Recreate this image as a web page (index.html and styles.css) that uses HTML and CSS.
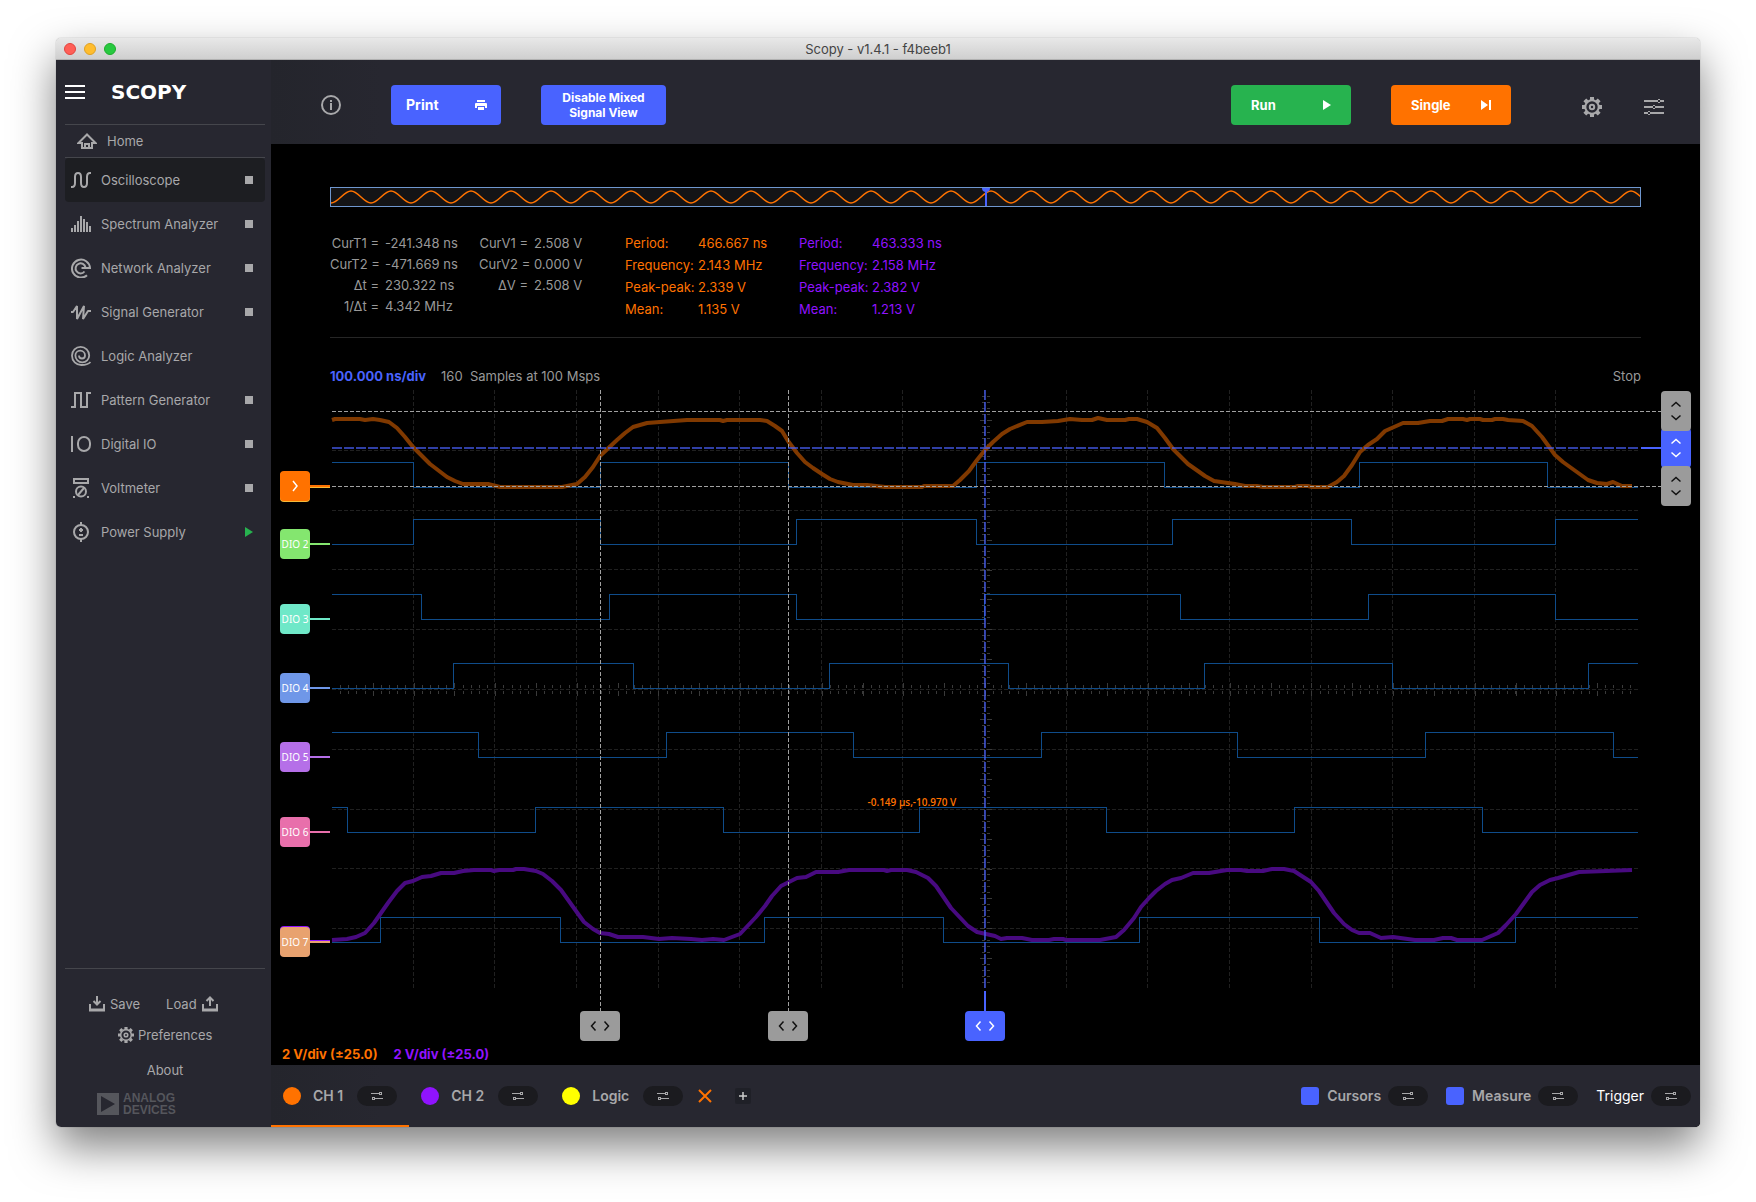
FILE: index.html
```html
<!DOCTYPE html>
<html lang="en">
<head>
<meta charset="utf-8">
<title>Scopy - v1.4.1 - f4beeb1</title>
<link rel="stylesheet" href="styles.css">
</head>
<body>
<svg class="defs" width="0" height="0" aria-hidden="true">
  <symbol id="i-tune" viewBox="0 0 12 10"><path d="M0 2.500h8M4 7.500h8" stroke="currentColor" fill="none"/><rect x="8.500" y="1.500" width="2" height="2" fill="none" stroke="currentColor"/><rect x="1.500" y="6.500" width="2" height="2" fill="none" stroke="currentColor"/></symbol>
  <symbol id="i-gear" viewBox="0 0 20 20"><circle cx="10" cy="10" r="6.700" fill="none" stroke="currentColor" stroke-width="2"/><circle cx="10" cy="10" r="2.200" fill="none" stroke="currentColor" stroke-width="2"/><path d="M10 0v3M10 17v3M0 10h3M17 10h3M2.800 2.800l2.200 2.200M15 15l2.200 2.200M2.800 17.200l2.200-2.200M15 5l2.200-2.200" stroke="currentColor" stroke-width="4"/></symbol>
  <symbol id="i-leftright" viewBox="0 0 20 10"><path d="M5.500 .5L1.500 5l4 4.500M14.500 .5l4 4.500-4 4.500" fill="none" stroke="currentColor" stroke-width="1.500"/></symbol>
  <symbol id="i-updown" viewBox="0 0 10 20"><path d="M.5 5.500L5 1.500l4.500 4M.5 14.500l4.500 4 4.500-4" fill="none" stroke="currentColor" stroke-width="1.500"/></symbol>
</svg>

<div class="window">
  <header class="titlebar">
    <div class="lights"><span class="light light-red"></span><span class="light light-yellow"></span><span class="light light-green"></span></div>
    <h1 class="title">Scopy - v1.4.1 - f4beeb1</h1>
  </header>

  <div class="app">
    <aside class="sidebar">
      <div class="brand">
        <button class="plain menu" aria-label="Menu"><svg width="20" height="14"><path d="M0 1h20M0 7h20M0 13h20" stroke="#fff" stroke-width="2"/></svg></button>
        <span class="brand-name">SCOPY</span>
      </div>
      <a class="home" href="#"><svg width="20" height="16" fill="none" stroke="currentColor" stroke-width="2"><path d="M1.500 10L10 1.500 18.500 10H15v5H5v-5z"/><path d="M8 15v-4h4v4"/></svg>Home</a>
      <ul class="tools">
        <li><a class="tool active" href="#"><svg width="20" height="20" fill="none" stroke="currentColor" stroke-width="2"><path d="M0 17h1c2 0 3-1 3-4V7c0-3 1-4 3-4s3 1 3 4v6c0 3 1 4 3 4s3-1 3-4V7c0-3 1-4 3-4h1"/></svg><span>Oscilloscope</span><i class="stop"></i></a></li>
        <li><a class="tool" href="#"><svg width="20" height="20" stroke="currentColor" stroke-width="2"><path d="M1 18v-4M4 18v-7M7 18V7M10 18V2M13 18V5M16 18V8M19 18v-6"/></svg><span>Spectrum Analyzer</span><i class="stop"></i></a></li>
        <li><a class="tool" href="#"><svg width="20" height="20" fill="none" stroke="currentColor" stroke-width="2"><path d="M16 17.300A9 9 0 1 1 19 10H10.500"/><path d="M13.500 13.500A5 5 0 1 1 14.500 9.500"/></svg><span>Network Analyzer</span><i class="stop"></i></a></li>
        <li><a class="tool" href="#"><svg width="20" height="20" fill="none" stroke="currentColor" stroke-width="2"><path d="M0 10h2l4-6v13L13 4l-1 13 5-8h3" stroke-linejoin="bevel"/></svg><span>Signal Generator</span><i class="stop"></i></a></li>
        <li><a class="tool" href="#"><svg width="20" height="20" fill="none" stroke="currentColor" stroke-width="1.800"><path d="M19.500 16c-2 2.200-5 3-9 3A9.300 9.300 0 0 1 1 9.500a8.600 8.600 0 0 1 17.200 0 6.900 6.900 0 0 1-13.800 0 4.800 4.800 0 0 1 9.600 0 3 3 0 0 1-6 0"/></svg><span>Logic Analyzer</span></a></li>
        <li><a class="tool" href="#"><svg width="20" height="20" fill="none" stroke="currentColor" stroke-width="2"><path d="M0 17h4V3h6v14h6V3h4"/></svg><span>Pattern Generator</span><i class="stop"></i></a></li>
        <li><a class="tool" href="#"><svg width="20" height="20" fill="none" stroke="currentColor" stroke-width="2"><path d="M1 2v16"/><rect x="7" y="3" width="12" height="14" rx="6"/></svg><span>Digital IO</span><i class="stop"></i></a></li>
        <li><a class="tool" href="#"><svg width="20" height="20" fill="none" stroke="currentColor" stroke-width="2"><path d="M3 1h14v4H3zM7 17l6-7M2 19h2M16 19h2"/><circle cx="10" cy="13.500" r="5"/></svg><span>Voltmeter</span><i class="stop"></i></a></li>
        <li><a class="tool" href="#"><svg width="20" height="20" fill="none" stroke="currentColor" stroke-width="2"><circle cx="10" cy="10" r="7"/><path d="M10 0v4M10 16v4M8 8h4M10 6v4M8 13h4"/></svg><span>Power Supply</span><i class="running"></i></a></li>
      </ul>
      <footer class="side-foot">
        <div class="side-row">
          <button class="plain"><svg width="16" height="16" fill="none" stroke="currentColor" stroke-width="2"><path d="M1 8v6h14V8M8 0v8M4.500 5L8 8.500 11.500 5"/><path d="M0 14h16" stroke-width="3"/></svg>Save</button>
          <button class="plain">Load<svg width="16" height="16" fill="none" stroke="currentColor" stroke-width="2"><path d="M1 8v6h14V8M8 10V2M4.500 5L8 1.500 11.500 5"/><path d="M0 14h16" stroke-width="3"/></svg></button>
        </div>
        <button class="plain prefs"><svg width="16" height="16"><use href="#i-gear"/></svg>Preferences</button>
        <button class="plain about">About</button>
        <div class="adi"><svg width="22" height="22"><path fill="#55565c" fill-rule="evenodd" d="M0 0h22v22H0zM4 3v16l14-8z"/></svg><span>ANALOG<br>DEVICES</span></div>
      </footer>
    </aside>

    <main class="main">
      <div class="toolbar">
        <button class="plain" aria-label="Info"><svg width="20" height="20"><circle cx="10" cy="10" r="9" fill="none" stroke="currentColor" stroke-width="2"/><path d="M10 5v2M10 8v7" stroke="currentColor" stroke-width="2"/></svg></button>
        <button class="btn print">Print<svg width="12" height="12" fill="#fff"><path d="M2 1h8v2H2zM1 4h10a1 1 0 0 1 1 1v4h-2V7H2v2H0V5a1 1 0 0 1 1-1zM3 8h6v3H3z"/></svg></button>
        <button class="btn mixed">Disable Mixed Signal View</button>
        <div class="spacer"></div>
        <button class="btn run">Run<svg width="8" height="10" fill="#fff"><path d="M0 0l8 5-8 5z"/></svg></button>
        <button class="btn single">Single<svg width="10" height="10" fill="#fff"><path d="M0 0l7 5-7 5zM8 0h2v10H8z"/></svg></button>
        <div class="toolbar-icons">
          <button class="plain" aria-label="Settings"><svg width="20" height="20"><use href="#i-gear"/></svg></button>
          <button class="plain" aria-label="Channel settings"><svg width="20" height="16" shape-rendering="crispEdges"><path d="M0 2h13M17 2h3M0 8h8M12 8h8M0 14h3M7 14h13" stroke="currentColor" stroke-width="2"/><path d="M14 .5h2M14 3.500h2M13.500 1v2M16.500 1v2M9 6.500h2M9 9.500h2M4 12.500h2M4 15.500h2M8.500 7v2M11.500 7v2M3.500 13v2M6.500 13v2" stroke="currentColor"/></svg></button>
        </div>
      </div>

      <section class="preview" aria-label="Buffer preview">
        <svg width="100%" height="18">
          <defs><pattern id="sine" width="40" height="18" patternUnits="userSpaceOnUse"><path d="M-20 3C-12.700 3-7.300 15 0 15S12.700 3 20 3 32.700 15 40 15 52.700 3 60 3" fill="none" stroke="#ff7200" stroke-width="1.500"/></pattern></defs>
          <rect width="100%" height="18" fill="url(#sine)"/>
        </svg>
        <span class="preview-mark"></span>
      </section>

      <section class="readouts">
        <table class="cursor-t">
          <tr><th>CurT1 =</th><td>-241.348 ns</td></tr>
          <tr><th>CurT2 =</th><td>-471.669 ns</td></tr>
          <tr><th>Δt =</th><td>230.322 ns</td></tr>
          <tr><th>1/Δt =</th><td>4.342 MHz</td></tr>
        </table>
        <table class="cursor-v">
          <tr><th>CurV1 =</th><td>2.508 V</td></tr>
          <tr><th>CurV2 =</th><td>0.000 V</td></tr>
          <tr><th>ΔV =</th><td>2.508 V</td></tr>
        </table>
        <table class="measure ch1">
          <tr><th>Period:</th><td>466.667 ns</td></tr>
          <tr><th>Frequency:</th><td>2.143 MHz</td></tr>
          <tr><th>Peak-peak:</th><td>2.339 V</td></tr>
          <tr><th>Mean:</th><td>1.135 V</td></tr>
        </table>
        <table class="measure ch2">
          <tr><th>Period:</th><td>463.333 ns</td></tr>
          <tr><th>Frequency:</th><td>2.158 MHz</td></tr>
          <tr><th>Peak-peak:</th><td>2.382 V</td></tr>
          <tr><th>Mean:</th><td>1.213 V</td></tr>
        </table>
      </section>

      <div class="plot-head">
        <strong>100.000 ns/div</strong><span>160&nbsp; Samples at 100 Msps</span><span class="state">Stop</span>
      </div>

      <section class="plot">
        <svg class="traces" viewBox="0 0 1306 598" preserveAspectRatio="none" fill="none">
          <g shape-rendering="crispEdges">
            <path stroke="#202020" stroke-dasharray="4 2" d="M81.500 0V598M162.500 0V598M244.500 0V598M326.500 0V598M407.500 0V598M489.500 0V598M570.500 0V598M652.500 0V598M734.500 0V598M815.500 0V598M897.500 0V598M979.500 0V598M1060.500 0V598M1142.500 0V598M1223.500 0V598M0 60.500H1306M0 120.500H1306M0 179.500H1306M0 239.500H1306M0 299.500H1306M0 359.500H1306M0 419.500H1306M0 478.500H1306M0 538.500H1306"/>
            <g stroke="#3a3a3a">
              <path stroke-width="3" stroke-dasharray="1 7.162" d="M8.100 296.500H1306M8.100 302.500H1306"/>
              <path stroke-width="5" stroke-dasharray="1 39.812" d="M40.800 295.500H1306M40.800 303.500H1306"/>
              <path stroke-width="3" stroke-dasharray="1 4.980" d="M651.500 6V598M656.500 6V598"/>
              <path stroke-width="5" stroke-dasharray="1 28.900" d="M650.500 30V598M657.500 30V598"/>
            </g>
            <g stroke="#0f4c8a">
              <path d="M0 72.500H81.500V97.500H268.500V72.500H456.500V97.500H644.500V72.500H832.500V97.500H1027.500V72.500H1215.500V97.500H1306"/>
              <path d="M0 154.500H81.500V129.500H268.500V154.500H464.500V129.500H644.500V154.500H840.500V129.500H1019.500V154.500H1223.500V129.500H1306"/>
              <path d="M0 204.500H89.500V229.500H277.500V204.500H464.500V229.500H652.500V204.500H848.500V229.500H1036.500V204.500H1223.500V229.500H1306"/>
              <path d="M0 298.500H121.500V273.500H301.500V298.500H497.500V273.500H676.500V298.500H872.500V273.500H1060.500V298.500H1256.500V273.500H1306"/>
              <path d="M0 342.500H146.500V367.500H334.500V342.500H521.500V367.500H709.500V342.500H905.500V367.500H1093.500V342.500H1281.500V367.500H1306"/>
              <path d="M0 417.500H15.500V442.500H203.500V417.500H391.500V442.500H587.500V417.500H774.500V442.500H962.500V417.500H1150.500V442.500H1306"/>
              <path d="M0 552.500H48.500V527.500H228.500V552.500H432.500V527.500H611.500V552.500H807.500V527.500H987.500V552.500H1183.500V527.500H1306"/>
            </g>
          </g>
          <g stroke-width="4" stroke-linejoin="round">
            <polyline stroke="#803900" points="0,30 3,29 28,29 33,30 41,29 48,30 57,32 65,38 73,47 81,57 98,74 115,87 123,91 131,94 156,94 168,97 230,97 245,94 253,87 261,77 268,66 285,50 293,43 301,37 315,33 328,32 355,30 388,30 391,31 395,30 428,30 435,31 443,36 450,41 456,51 465,63 473,72 481,78 490,84 498,89 506,92 521,95 535,95 553,97 590,97 592,96 621,96 628,90 637,81 645,70 653,60 661,52 670,44 678,39 695,32 710,32 726,31 738,29 750,30 760,30 766,28 775,30 793,30 797,29 805,29 815,32 825,38 833,48 841,59 849,67 856,74 873,86 882,91 903,94 913,96 925,96 931,97 963,97 966,96 976,96 980,97 996,97 1005,92 1012,86 1020,75 1028,62 1036,55 1045,49 1053,41 1071,33 1086,33 1098,31 1110,31 1116,29 1131,29 1135,30 1138,29 1148,29 1151,30 1160,30 1163,29 1171,29 1176,30 1191,31 1200,36 1210,47 1223,65 1231,72 1256,90 1265,93 1275,94 1281,92 1290,96 1300,96"/>
            <polyline stroke="#480a80" points="0,550 15,549 24,547 33,543 42,533 56,513 65,501 73,493 81,491 90,487 99,486 109,483 122,483 131,481 142,480 159,480 162,481 167,480 181,480 184,479 192,479 204,481 211,484 220,491 229,500 244,521 252,532 261,539 268,543 277,544 286,547 311,547 327,549 340,548 359,549 370,550 381,549 392,550 400,547 408,544 424,527 433,516 440,506 449,496 465,488 474,487 484,482 506,482 517,480 552,480 555,481 559,480 575,480 584,482 596,488 604,496 619,518 636,536 645,542 654,544 663,546 669,549 675,548 690,548 700,550 717,550 722,549 731,549 734,550 768,550 784,547 792,540 802,528 809,517 817,508 824,501 833,494 840,490 849,488 861,483 877,483 895,480 909,480 915,481 931,481 940,479 952,479 962,481 979,492 987,501 1002,523 1012,534 1020,540 1027,543 1038,543 1049,548 1061,547 1083,550 1102,550 1111,548 1119,548 1125,550 1150,550 1166,543 1174,535 1184,524 1200,502 1208,495 1218,490 1226,488 1247,482 1274,481 1300,480"/>
          </g>
          <g shape-rendering="crispEdges">
            <path stroke="#a0a0a0" stroke-dasharray="4 2" d="M0 21.500H1330M0 96.500H1330M268.500 0V622M456.500 0V622"/>
            <path stroke="#4963ff" stroke-opacity=".65" stroke-width="2" stroke-dasharray="10 2" d="M0 58H1306M653 0V598"/>
            <path stroke="#4963ff" stroke-width="2" d="M1309 58H1330M653 601V622"/>
          </g>
        </svg>

        <span class="coords">-0.149 µs,-10.970 V</span>

        <div class="handle ch-h under-dio1"></div>
        <button class="handle ch-h h-ch1" aria-label="Channel 1"><svg width="6" height="12"><path d="M1 1l4 5-4 5" fill="none" stroke="#fff" stroke-width="1.500"/></svg></button>
        <button class="handle ch-h h-dio2">DIO 2</button>
        <button class="handle ch-h h-dio3">DIO 3</button>
        <button class="handle ch-h h-dio4">DIO 4</button>
        <button class="handle ch-h h-dio5">DIO 5</button>
        <button class="handle ch-h h-dio6">DIO 6</button>
        <div class="handle ch-h under-ch2"></div>
        <button class="handle ch-h h-dio7">DIO 7</button>

        <button class="handle v-h v-trigger" aria-label="Trigger level"><svg width="10" height="20"><use href="#i-updown"/></svg></button>
        <button class="handle v-h v-cursor1" aria-label="Voltage cursor 1"><svg width="10" height="20"><use href="#i-updown"/></svg></button>
        <button class="handle v-h v-cursor2" aria-label="Voltage cursor 2"><svg width="10" height="20"><use href="#i-updown"/></svg></button>

        <button class="handle t-h t-cursor2" aria-label="Time cursor 2"><svg width="20" height="10"><use href="#i-leftright"/></svg></button>
        <button class="handle t-h t-cursor1" aria-label="Time cursor 1"><svg width="20" height="10"><use href="#i-leftright"/></svg></button>
        <button class="handle t-h t-trigger" aria-label="Trigger position"><svg width="20" height="10"><use href="#i-leftright"/></svg></button>
      </section>

      <div class="scales"><span class="ch1">2 V/div (±25.0)</span><span class="ch2">2 V/div (±25.0)</span></div>

      <div class="bottombar">
        <div class="channel selected"><label><input class="dot dot-ch1" type="checkbox" checked>CH 1</label><button class="pill" aria-label="CH 1 settings"><svg width="12" height="10"><use href="#i-tune"/></svg></button></div>
        <div class="channel"><label><input class="dot dot-ch2" type="checkbox" checked>CH 2</label><button class="pill" aria-label="CH 2 settings"><svg width="12" height="10"><use href="#i-tune"/></svg></button></div>
        <div class="channel"><label><input class="dot dot-logic" type="checkbox" checked>Logic</label><button class="pill" aria-label="Logic settings"><svg width="12" height="10"><use href="#i-tune"/></svg></button></div>
        <button class="plain close" aria-label="Remove"><svg width="14" height="14"><path d="M1 1l12 12M13 1L1 13" stroke="#ff7200" stroke-width="2"/></svg></button>
        <button class="plain add" aria-label="Add channel"><svg width="8" height="8"><path d="M4 0v8M0 4h8" stroke="#ccc" stroke-width="1.500"/></svg></button>
        <div class="spacer"></div>
        <div class="option"><label><input class="box" type="checkbox" checked>Cursors</label><button class="pill" aria-label="Cursor settings"><svg width="12" height="10"><use href="#i-tune"/></svg></button></div>
        <div class="option"><label><input class="box" type="checkbox" checked>Measure</label><button class="pill" aria-label="Measure settings"><svg width="12" height="10"><use href="#i-tune"/></svg></button></div>
        <div class="option trigger"><span>Trigger</span><button class="pill" aria-label="Trigger settings"><svg width="12" height="10"><use href="#i-tune"/></svg></button></div>
      </div>
    </main>
  </div>
</div>
</body>
</html>
```
FILE: styles.css
```css
* { box-sizing: border-box; }
body {
  margin: 0;
  padding: 38px 56px 74px;
  background: #fff;
  font: 13px/16px Inter, "Liberation Sans", sans-serif;
  color: #a8a8aa;
}
.defs { position: absolute; }
svg { display: block; flex: none; }
a { color: inherit; text-decoration: none; }
button { font: inherit; border: 0; padding: 0; color: inherit; }
.plain { background: none; display: flex; align-items: center; }
.spacer { flex: 1; }
.ch1 { color: #ff7200; }
.ch2 { color: #9013fe; }

.window {
  border-radius: 5px;
  box-shadow: 0 0 1px rgba(0,0,0,.5), 0 20px 44px rgba(0,0,0,.5);
}
.titlebar {
  height: 22px;
  display: grid;
  grid-template-columns: 1fr auto 1fr;
  align-items: center;
  border-radius: 5px 5px 0 0;
  border-bottom: 1px solid #b0b0b0;
  background: linear-gradient(#e8e8e8, #cfcfcf);
}
.title { margin: 0; font-size: 13px; font-weight: 400; color: #444; }
.lights { display: flex; gap: 8px; padding-left: 8px; }
.light { width: 12px; height: 12px; border-radius: 50%; border: 1px solid; }
.light-red { background: #ff5f57; border-color: #e2443e; }
.light-yellow { background: #ffbd2e; border-color: #dfa123; }
.light-green { background: #28c940; border-color: #1dad2b; }

.app {
  display: grid;
  grid-template-columns: 215px minmax(0, 1fr);
  background: #272730;
  border-radius: 0 0 5px 5px;
  overflow: hidden;
}

/* sidebar */
.sidebar { display: flex; flex-direction: column; padding: 0 6px 0 9px; }
.brand { height: 65px; display: flex; align-items: center; gap: 26px; border-bottom: 1px solid #45464c; }
.brand-name { font: bold 20px/24px "DejaVu Sans", sans-serif; color: #fff; }
.home { height: 33px; display: flex; align-items: center; gap: 10px; padding-left: 12px; border-bottom: 1px solid #45464c; }
.tools { list-style: none; margin: 0; padding: 0; }
.tool { height: 44px; display: flex; align-items: center; gap: 10px; padding: 0 12px 0 6px; border-radius: 4px; }
.tool span { flex: 1; }
.active { background: #1d1e22; }
.stop { width: 8px; height: 8px; background: #a8a8aa; }
.running { border-left: 8px solid #27b34f; border-top: 5px solid transparent; border-bottom: 5px solid transparent; }
.side-foot { margin-top: auto; border-top: 1px solid #45464c; padding: 23px 0 11px; display: flex; flex-direction: column; }
.side-row { display: flex; gap: 26px; padding-left: 24px; height: 24px; }
.side-row .plain { gap: 5px; }
.prefs { height: 24px; gap: 4px; margin-top: 7px; padding-left: 53px; }
.about { height: 24px; margin-top: 11px; justify-content: center; }
.adi { height: 24px; margin-top: 10px; padding-left: 32px; display: flex; align-items: center; gap: 4px; color: #55565c; font: bold 12px/12px "Liberation Sans", Arial, sans-serif; }

/* main area */
.main { background: #000; }
.toolbar { height: 84px; display: flex; align-items: center; gap: 40px; padding: 6px 36px 0 50px; background: linear-gradient(90deg, #24252c, #272730 110px); }
.btn { height: 40px; border-radius: 4px; color: #fff; font-weight: 700; display: flex; align-items: center; justify-content: space-between; background: #4963ff; }
.print { width: 110px; padding: 0 14px 0 15px; margin-left: 10px; font-size: 14px; }
.mixed { width: 125px; padding: 0 20px; justify-content: center; font-size: 12px; line-height: 15px; }
.run, .single { width: 120px; padding: 0 20px; }
.run { background: #27b34f; }
.single { background: #ff7200; }
.toolbar-icons { display: flex; align-items: center; gap: 42px; padding: 4px 0 0 31px; }

.preview { position: relative; margin: 43px 59px 0; height: 20px; border: 1px solid #6f97cf; background: #141416; }
.preview-mark { position: absolute; left: 50%; top: 0; width: 2px; height: 18px; margin-left: -1px; background: #4963ff; }
.preview-mark::before { content: ""; position: absolute; left: -3px; top: 0; width: 8px; height: 4px; background: #4963ff; border-radius: 0 0 4px 4px; }

.readouts { display: flex; align-items: flex-start; margin: 25px 59px 0; padding-bottom: 17px; border-bottom: 1px solid #262626; color: #999; }
.readouts table { border-collapse: collapse; table-layout: fixed; }
.readouts th, .readouts td { padding: 0; height: 21px; font-weight: 400; text-align: left; white-space: nowrap; }
.cursor-t { width: 149px; }
.cursor-v { width: 146px; }
.readouts .cursor-t th, .readouts .cursor-v th { width: 55px; padding-right: 6px; text-align: right; }
.measure { width: 174px; }
.readouts .measure th { width: 73px; height: 22px; }
.readouts .measure td { height: 22px; }
.readouts .ch1 { color: #ff7200; }
.readouts .ch2 { color: #9013fe; }

.plot-head { display: flex; align-items: center; gap: 15px; height: 28px; margin: 24px 59px 0; color: #999; }
.plot-head strong { color: #4963ff; }
.state { margin-left: auto; }

.plot { position: relative; margin: 0 62px 0 61px; }
.traces { width: 100%; height: 598px; overflow: visible; }
.coords { position: absolute; left: 41%; top: 404px; font: 600 10px/16px "Open Sans", "Noto Sans", sans-serif; color: #ff7200; white-space: nowrap; }
.handle { position: absolute; display: flex; align-items: center; justify-content: center; border-radius: 4px; }
.ch-h { left: -52px; width: 30px; height: 30px; color: #fff; font: 10px/12px "Noto Sans", "Open Sans", sans-serif; white-space: nowrap; background: var(--c); }
.ch-h::after { content: ""; position: absolute; left: 29px; top: 14px; width: 21px; height: 2px; background: var(--c); }
.under-dio1 { top: 82px; --c: #f4b93a; }
.h-ch1 { top: 81px; --c: #ff7200; }
.h-dio2 { top: 139px; --c: #84e66f; }
.h-dio3 { top: 214px; --c: #6fe8c8; }
.h-dio4 { top: 283px; --c: #6f97e8; }
.h-dio5 { top: 352px; --c: #b56fe8; }
.h-dio6 { top: 427px; --c: #e86fab; }
.under-ch2 { top: 536px; --c: #9013fe; }
.h-dio7 { top: 537px; --c: #e8a26f; }
.v-h { right: -53px; width: 30px; height: 40px; background: #9b9b9b; color: #111; }
.v-cursor1 { top: 1px; }
.v-trigger { top: 38px; background: #4963ff; color: #fff; }
.v-cursor2 { top: 76px; }
.t-h { top: 621px; width: 40px; height: 30px; margin-left: -20px; background: #9b9b9b; color: #111; }
.t-cursor2 { left: 20.5%; }
.t-cursor1 { left: 34.9%; }
.t-trigger { left: 50%; background: #4963ff; color: #fff; }

.scales { height: 77px; display: flex; align-items: flex-end; gap: 16px; padding: 0 11px 3px; font-weight: 700; }

.bottombar { height: 62px; display: flex; align-items: stretch; padding-right: 9px; background: linear-gradient(90deg, #24252c, #272730 110px); font-size: 14px; font-weight: 600; }
.channel { display: flex; align-items: center; gap: 14px; padding: 0 12px; }
.selected { box-shadow: inset 0 -2px #ff7200; }
.channel label { display: flex; align-items: center; gap: 12px; }
.dot, .box { appearance: none; margin: 0; width: 18px; height: 18px; }
.dot { border-radius: 50%; }
.dot-ch1 { background: #ff7200; }
.dot-ch2 { background: #9013fe; }
.dot-logic { background: #ff0; }
.box { border-radius: 3px; background: #4963ff; }
.pill { width: 40px; height: 20px; border-radius: 10px; background: #1b1b1f; color: #a8a8aa; display: flex; align-items: center; justify-content: center; }
.close { margin-left: 3px; }
.add { align-self: center; width: 16px; height: 16px; margin-left: 23px; border-radius: 2px; justify-content: center; background: #1f2027; }
.option { display: flex; align-items: center; gap: 7px; margin-left: 18px; }
.option label { display: flex; align-items: center; gap: 8px; }
.trigger { color: #fff; font-weight: 400; }
```
